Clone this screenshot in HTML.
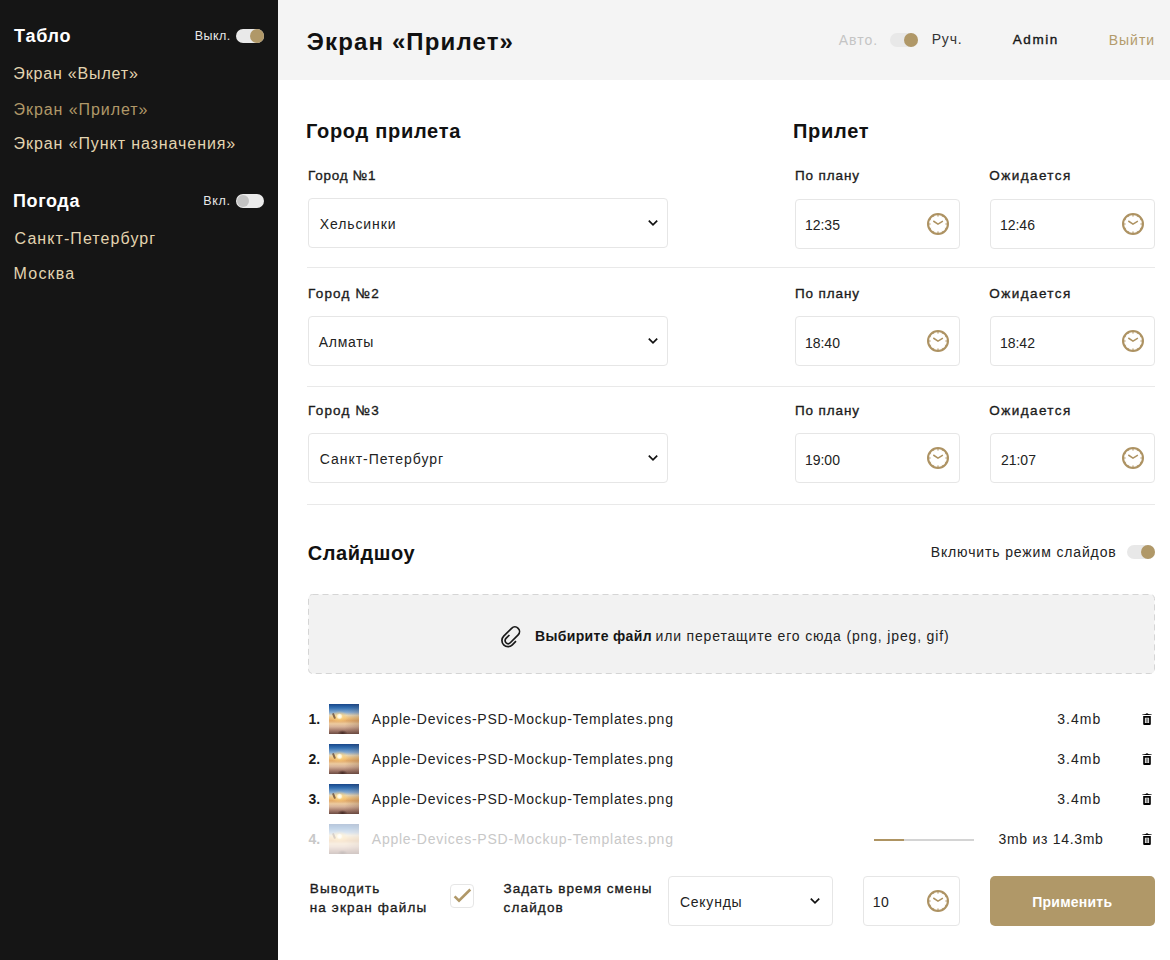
<!DOCTYPE html>
<html><head><meta charset="utf-8"><style>
html,body{margin:0;padding:0;width:1170px;height:960px;overflow:hidden;background:#fff;font-family:"Liberation Sans",sans-serif;}
.t{position:absolute;white-space:nowrap;}
</style></head><body>
<div style="position:absolute;left:0px;top:0px;width:278px;height:960px;background:#151515;"></div>
<div style="position:absolute;left:278px;top:0px;width:892px;height:80px;background:#f4f4f4;"></div>
<div style="position:absolute;left:236px;top:29px;width:28px;height:14px;border-radius:7px;background:#e9e9e9"></div>
<div style="position:absolute;left:250px;top:29px;width:14px;height:14px;border-radius:7px;background:#b09868"></div>
<div style="position:absolute;left:236px;top:194px;width:28px;height:14px;border-radius:7px;background:#ebebeb"></div>
<div style="position:absolute;left:237px;top:195px;width:12px;height:12px;border-radius:6px;background:#c3c3c3"></div>
<div style="position:absolute;left:890px;top:33px;width:28px;height:14px;border-radius:7px;background:#e8e8e8"></div>
<div style="position:absolute;left:904px;top:33px;width:14px;height:14px;border-radius:7px;background:#b09868"></div>
<div style="position:absolute;left:308px;top:198px;width:360px;height:50px;box-sizing:border-box;border:1px solid #e6e6e6;border-radius:4px;background:#fff"></div>
<svg style="position:absolute;left:646.5px;top:218.4px" width="12" height="10" viewBox="0 0 12 10"><polyline points="1.8,2.6 6,6.8 10.2,2.6" fill="none" stroke="#111" stroke-width="1.7" stroke-linecap="butt" stroke-linejoin="miter"/></svg>
<div style="position:absolute;left:795px;top:199px;width:165px;height:50px;box-sizing:border-box;border:1px solid #e6e6e6;border-radius:4px;background:#fff"></div>
<div style="position:absolute;left:990px;top:199px;width:165px;height:50px;box-sizing:border-box;border:1px solid #e6e6e6;border-radius:4px;background:#fff"></div>
<svg style="position:absolute;left:925.8px;top:212px" width="24" height="24" viewBox="0 0 24 24"><circle cx="12" cy="12" r="9.95" fill="none" stroke="#ad9262" stroke-width="2.1"/><line x1="12.00" y1="3.00" x2="12.00" y2="4.60" stroke="#ad9262" stroke-width="1.2"/><line x1="16.50" y1="4.21" x2="16.00" y2="5.07" stroke="#ad9262" stroke-width="0.9"/><line x1="19.79" y1="7.50" x2="18.93" y2="8.00" stroke="#ad9262" stroke-width="0.9"/><line x1="21.00" y1="12.00" x2="19.40" y2="12.00" stroke="#ad9262" stroke-width="1.2"/><line x1="19.79" y1="16.50" x2="18.93" y2="16.00" stroke="#ad9262" stroke-width="0.9"/><line x1="16.50" y1="19.79" x2="16.00" y2="18.93" stroke="#ad9262" stroke-width="0.9"/><line x1="12.00" y1="21.00" x2="12.00" y2="19.40" stroke="#ad9262" stroke-width="1.2"/><line x1="7.50" y1="19.79" x2="8.00" y2="18.93" stroke="#ad9262" stroke-width="0.9"/><line x1="4.21" y1="16.50" x2="5.07" y2="16.00" stroke="#ad9262" stroke-width="0.9"/><line x1="3.00" y1="12.00" x2="4.60" y2="12.00" stroke="#ad9262" stroke-width="1.2"/><line x1="4.21" y1="7.50" x2="5.07" y2="8.00" stroke="#ad9262" stroke-width="0.9"/><line x1="7.50" y1="4.21" x2="8.00" y2="5.07" stroke="#ad9262" stroke-width="0.9"/><polyline points="7.3,9 12,12.1 16.9,9.2" fill="none" stroke="#ad9262" stroke-width="1.5" stroke-linejoin="miter"/></svg>
<svg style="position:absolute;left:1120.8px;top:212px" width="24" height="24" viewBox="0 0 24 24"><circle cx="12" cy="12" r="9.95" fill="none" stroke="#ad9262" stroke-width="2.1"/><line x1="12.00" y1="3.00" x2="12.00" y2="4.60" stroke="#ad9262" stroke-width="1.2"/><line x1="16.50" y1="4.21" x2="16.00" y2="5.07" stroke="#ad9262" stroke-width="0.9"/><line x1="19.79" y1="7.50" x2="18.93" y2="8.00" stroke="#ad9262" stroke-width="0.9"/><line x1="21.00" y1="12.00" x2="19.40" y2="12.00" stroke="#ad9262" stroke-width="1.2"/><line x1="19.79" y1="16.50" x2="18.93" y2="16.00" stroke="#ad9262" stroke-width="0.9"/><line x1="16.50" y1="19.79" x2="16.00" y2="18.93" stroke="#ad9262" stroke-width="0.9"/><line x1="12.00" y1="21.00" x2="12.00" y2="19.40" stroke="#ad9262" stroke-width="1.2"/><line x1="7.50" y1="19.79" x2="8.00" y2="18.93" stroke="#ad9262" stroke-width="0.9"/><line x1="4.21" y1="16.50" x2="5.07" y2="16.00" stroke="#ad9262" stroke-width="0.9"/><line x1="3.00" y1="12.00" x2="4.60" y2="12.00" stroke="#ad9262" stroke-width="1.2"/><line x1="4.21" y1="7.50" x2="5.07" y2="8.00" stroke="#ad9262" stroke-width="0.9"/><line x1="7.50" y1="4.21" x2="8.00" y2="5.07" stroke="#ad9262" stroke-width="0.9"/><polyline points="7.3,9 12,12.1 16.9,9.2" fill="none" stroke="#ad9262" stroke-width="1.5" stroke-linejoin="miter"/></svg>
<div style="position:absolute;left:308px;top:316px;width:360px;height:50px;box-sizing:border-box;border:1px solid #e6e6e6;border-radius:4px;background:#fff"></div>
<svg style="position:absolute;left:646.5px;top:336.4px" width="12" height="10" viewBox="0 0 12 10"><polyline points="1.8,2.6 6,6.8 10.2,2.6" fill="none" stroke="#111" stroke-width="1.7" stroke-linecap="butt" stroke-linejoin="miter"/></svg>
<div style="position:absolute;left:795px;top:316px;width:165px;height:50px;box-sizing:border-box;border:1px solid #e6e6e6;border-radius:4px;background:#fff"></div>
<div style="position:absolute;left:990px;top:316px;width:165px;height:50px;box-sizing:border-box;border:1px solid #e6e6e6;border-radius:4px;background:#fff"></div>
<svg style="position:absolute;left:925.8px;top:329px" width="24" height="24" viewBox="0 0 24 24"><circle cx="12" cy="12" r="9.95" fill="none" stroke="#ad9262" stroke-width="2.1"/><line x1="12.00" y1="3.00" x2="12.00" y2="4.60" stroke="#ad9262" stroke-width="1.2"/><line x1="16.50" y1="4.21" x2="16.00" y2="5.07" stroke="#ad9262" stroke-width="0.9"/><line x1="19.79" y1="7.50" x2="18.93" y2="8.00" stroke="#ad9262" stroke-width="0.9"/><line x1="21.00" y1="12.00" x2="19.40" y2="12.00" stroke="#ad9262" stroke-width="1.2"/><line x1="19.79" y1="16.50" x2="18.93" y2="16.00" stroke="#ad9262" stroke-width="0.9"/><line x1="16.50" y1="19.79" x2="16.00" y2="18.93" stroke="#ad9262" stroke-width="0.9"/><line x1="12.00" y1="21.00" x2="12.00" y2="19.40" stroke="#ad9262" stroke-width="1.2"/><line x1="7.50" y1="19.79" x2="8.00" y2="18.93" stroke="#ad9262" stroke-width="0.9"/><line x1="4.21" y1="16.50" x2="5.07" y2="16.00" stroke="#ad9262" stroke-width="0.9"/><line x1="3.00" y1="12.00" x2="4.60" y2="12.00" stroke="#ad9262" stroke-width="1.2"/><line x1="4.21" y1="7.50" x2="5.07" y2="8.00" stroke="#ad9262" stroke-width="0.9"/><line x1="7.50" y1="4.21" x2="8.00" y2="5.07" stroke="#ad9262" stroke-width="0.9"/><polyline points="7.3,9 12,12.1 16.9,9.2" fill="none" stroke="#ad9262" stroke-width="1.5" stroke-linejoin="miter"/></svg>
<svg style="position:absolute;left:1120.8px;top:329px" width="24" height="24" viewBox="0 0 24 24"><circle cx="12" cy="12" r="9.95" fill="none" stroke="#ad9262" stroke-width="2.1"/><line x1="12.00" y1="3.00" x2="12.00" y2="4.60" stroke="#ad9262" stroke-width="1.2"/><line x1="16.50" y1="4.21" x2="16.00" y2="5.07" stroke="#ad9262" stroke-width="0.9"/><line x1="19.79" y1="7.50" x2="18.93" y2="8.00" stroke="#ad9262" stroke-width="0.9"/><line x1="21.00" y1="12.00" x2="19.40" y2="12.00" stroke="#ad9262" stroke-width="1.2"/><line x1="19.79" y1="16.50" x2="18.93" y2="16.00" stroke="#ad9262" stroke-width="0.9"/><line x1="16.50" y1="19.79" x2="16.00" y2="18.93" stroke="#ad9262" stroke-width="0.9"/><line x1="12.00" y1="21.00" x2="12.00" y2="19.40" stroke="#ad9262" stroke-width="1.2"/><line x1="7.50" y1="19.79" x2="8.00" y2="18.93" stroke="#ad9262" stroke-width="0.9"/><line x1="4.21" y1="16.50" x2="5.07" y2="16.00" stroke="#ad9262" stroke-width="0.9"/><line x1="3.00" y1="12.00" x2="4.60" y2="12.00" stroke="#ad9262" stroke-width="1.2"/><line x1="4.21" y1="7.50" x2="5.07" y2="8.00" stroke="#ad9262" stroke-width="0.9"/><line x1="7.50" y1="4.21" x2="8.00" y2="5.07" stroke="#ad9262" stroke-width="0.9"/><polyline points="7.3,9 12,12.1 16.9,9.2" fill="none" stroke="#ad9262" stroke-width="1.5" stroke-linejoin="miter"/></svg>
<div style="position:absolute;left:308px;top:433px;width:360px;height:50px;box-sizing:border-box;border:1px solid #e6e6e6;border-radius:4px;background:#fff"></div>
<svg style="position:absolute;left:646.5px;top:453.4px" width="12" height="10" viewBox="0 0 12 10"><polyline points="1.8,2.6 6,6.8 10.2,2.6" fill="none" stroke="#111" stroke-width="1.7" stroke-linecap="butt" stroke-linejoin="miter"/></svg>
<div style="position:absolute;left:795px;top:433px;width:165px;height:50px;box-sizing:border-box;border:1px solid #e6e6e6;border-radius:4px;background:#fff"></div>
<div style="position:absolute;left:990px;top:433px;width:165px;height:50px;box-sizing:border-box;border:1px solid #e6e6e6;border-radius:4px;background:#fff"></div>
<svg style="position:absolute;left:925.8px;top:446px" width="24" height="24" viewBox="0 0 24 24"><circle cx="12" cy="12" r="9.95" fill="none" stroke="#ad9262" stroke-width="2.1"/><line x1="12.00" y1="3.00" x2="12.00" y2="4.60" stroke="#ad9262" stroke-width="1.2"/><line x1="16.50" y1="4.21" x2="16.00" y2="5.07" stroke="#ad9262" stroke-width="0.9"/><line x1="19.79" y1="7.50" x2="18.93" y2="8.00" stroke="#ad9262" stroke-width="0.9"/><line x1="21.00" y1="12.00" x2="19.40" y2="12.00" stroke="#ad9262" stroke-width="1.2"/><line x1="19.79" y1="16.50" x2="18.93" y2="16.00" stroke="#ad9262" stroke-width="0.9"/><line x1="16.50" y1="19.79" x2="16.00" y2="18.93" stroke="#ad9262" stroke-width="0.9"/><line x1="12.00" y1="21.00" x2="12.00" y2="19.40" stroke="#ad9262" stroke-width="1.2"/><line x1="7.50" y1="19.79" x2="8.00" y2="18.93" stroke="#ad9262" stroke-width="0.9"/><line x1="4.21" y1="16.50" x2="5.07" y2="16.00" stroke="#ad9262" stroke-width="0.9"/><line x1="3.00" y1="12.00" x2="4.60" y2="12.00" stroke="#ad9262" stroke-width="1.2"/><line x1="4.21" y1="7.50" x2="5.07" y2="8.00" stroke="#ad9262" stroke-width="0.9"/><line x1="7.50" y1="4.21" x2="8.00" y2="5.07" stroke="#ad9262" stroke-width="0.9"/><polyline points="7.3,9 12,12.1 16.9,9.2" fill="none" stroke="#ad9262" stroke-width="1.5" stroke-linejoin="miter"/></svg>
<svg style="position:absolute;left:1120.8px;top:446px" width="24" height="24" viewBox="0 0 24 24"><circle cx="12" cy="12" r="9.95" fill="none" stroke="#ad9262" stroke-width="2.1"/><line x1="12.00" y1="3.00" x2="12.00" y2="4.60" stroke="#ad9262" stroke-width="1.2"/><line x1="16.50" y1="4.21" x2="16.00" y2="5.07" stroke="#ad9262" stroke-width="0.9"/><line x1="19.79" y1="7.50" x2="18.93" y2="8.00" stroke="#ad9262" stroke-width="0.9"/><line x1="21.00" y1="12.00" x2="19.40" y2="12.00" stroke="#ad9262" stroke-width="1.2"/><line x1="19.79" y1="16.50" x2="18.93" y2="16.00" stroke="#ad9262" stroke-width="0.9"/><line x1="16.50" y1="19.79" x2="16.00" y2="18.93" stroke="#ad9262" stroke-width="0.9"/><line x1="12.00" y1="21.00" x2="12.00" y2="19.40" stroke="#ad9262" stroke-width="1.2"/><line x1="7.50" y1="19.79" x2="8.00" y2="18.93" stroke="#ad9262" stroke-width="0.9"/><line x1="4.21" y1="16.50" x2="5.07" y2="16.00" stroke="#ad9262" stroke-width="0.9"/><line x1="3.00" y1="12.00" x2="4.60" y2="12.00" stroke="#ad9262" stroke-width="1.2"/><line x1="4.21" y1="7.50" x2="5.07" y2="8.00" stroke="#ad9262" stroke-width="0.9"/><line x1="7.50" y1="4.21" x2="8.00" y2="5.07" stroke="#ad9262" stroke-width="0.9"/><polyline points="7.3,9 12,12.1 16.9,9.2" fill="none" stroke="#ad9262" stroke-width="1.5" stroke-linejoin="miter"/></svg>
<div style="position:absolute;left:307px;top:267px;width:848px;height:1px;background:#e9e9e9;"></div>
<div style="position:absolute;left:307px;top:386px;width:848px;height:1px;background:#e9e9e9;"></div>
<div style="position:absolute;left:307px;top:504px;width:848px;height:1px;background:#e9e9e9;"></div>
<div style="position:absolute;left:1127px;top:545px;width:28px;height:14px;border-radius:7px;background:#e8e8e8"></div>
<div style="position:absolute;left:1141px;top:545px;width:14px;height:14px;border-radius:7px;background:#b09868"></div>
<svg style="position:absolute;left:308px;top:594px" width="847" height="80" viewBox="0 0 847 80"><rect x="0.5" y="0.5" width="846" height="79" rx="4" ry="4" fill="#f2f2f2" stroke="#d5d5d5" stroke-width="1" stroke-dasharray="6 4"/></svg>
<svg style="position:absolute;left:495px;top:620px" width="35" height="35" viewBox="0 0 35 35"><g transform="rotate(45)"><path d="M20.8,0.4 L20.8,5.3 A3.05,3.05 0 0 0 26.9,5.3 L26.9,-5.85 A4.65,4.65 0 0 0 17.6,-5.85 L17.6,5.3 A6.1,6.1 0 0 0 29.8,5.3 L29.8,0.13" fill="none" stroke="#1a1a1a" stroke-width="1.7" stroke-linecap="butt"/></g></svg>
<div style="position:absolute;left:329px;top:704px;width:30px;height:30px;overflow:hidden;"><div style="position:absolute;inset:0;background:radial-gradient(ellipse 3px 3px at 35% 41%, #ffffff 0%, #fff6d8 60%, rgba(255,240,200,0) 100%),radial-gradient(ellipse 9px 6px at 35% 43%, rgba(255,235,170,0.95) 0%, rgba(255,210,120,0.5) 50%, rgba(255,200,100,0) 100%),radial-gradient(ellipse 5px 3px at 45% 97%, rgba(60,35,30,0.9) 0%, rgba(60,35,30,0) 100%),linear-gradient(100deg, rgba(255,255,255,0) 0%, rgba(255,255,255,0) 55%, rgba(90,60,50,0.25) 100%),linear-gradient(180deg,#17468a 0%,#3470b2 13%,#86aad0 28%,#e6d6b4 38%,#f0c27e 47%,#e3aa68 56%,#eccaa0 66%,#d6b298 76%,#a98070 87%,#6c4b42 100%)"></div><div style="position:absolute;left:3.5px;top:8.5px;width:1.8px;height:6px;background:rgba(90,60,45,0.7);transform:rotate(-22deg);border-radius:1px"></div></div>
<svg style="position:absolute;left:1142px;top:712.6px" width="12" height="14" viewBox="0 0 12 14"><path d="M0.3,1.4 C1.5,1.2 2.6,1.2 3.6,0.9 C4.2,0 5.8,0 6.4,0.9 C7.4,1.2 8.5,1.2 9.7,1.4 L9.7,2.1 L0.3,2.1 Z" fill="#000"/><path d="M1.2,3.0 L8.8,3.0 L8.8,11 Q8.8,12 7.8,12 L2.2,12 Q1.2,12 1.2,11 Z M2.9,4.8 L2.9,10.1 L7.1,10.1 L7.1,4.8 Z" fill="#000" fill-rule="evenodd"/><rect x="3.6" y="5.2" width="2.8" height="4.6" fill="#888"/></svg>
<div style="position:absolute;left:329px;top:744px;width:30px;height:30px;overflow:hidden;"><div style="position:absolute;inset:0;background:radial-gradient(ellipse 3px 3px at 35% 41%, #ffffff 0%, #fff6d8 60%, rgba(255,240,200,0) 100%),radial-gradient(ellipse 9px 6px at 35% 43%, rgba(255,235,170,0.95) 0%, rgba(255,210,120,0.5) 50%, rgba(255,200,100,0) 100%),radial-gradient(ellipse 5px 3px at 45% 97%, rgba(60,35,30,0.9) 0%, rgba(60,35,30,0) 100%),linear-gradient(100deg, rgba(255,255,255,0) 0%, rgba(255,255,255,0) 55%, rgba(90,60,50,0.25) 100%),linear-gradient(180deg,#17468a 0%,#3470b2 13%,#86aad0 28%,#e6d6b4 38%,#f0c27e 47%,#e3aa68 56%,#eccaa0 66%,#d6b298 76%,#a98070 87%,#6c4b42 100%)"></div><div style="position:absolute;left:3.5px;top:8.5px;width:1.8px;height:6px;background:rgba(90,60,45,0.7);transform:rotate(-22deg);border-radius:1px"></div></div>
<svg style="position:absolute;left:1142px;top:752.6px" width="12" height="14" viewBox="0 0 12 14"><path d="M0.3,1.4 C1.5,1.2 2.6,1.2 3.6,0.9 C4.2,0 5.8,0 6.4,0.9 C7.4,1.2 8.5,1.2 9.7,1.4 L9.7,2.1 L0.3,2.1 Z" fill="#000"/><path d="M1.2,3.0 L8.8,3.0 L8.8,11 Q8.8,12 7.8,12 L2.2,12 Q1.2,12 1.2,11 Z M2.9,4.8 L2.9,10.1 L7.1,10.1 L7.1,4.8 Z" fill="#000" fill-rule="evenodd"/><rect x="3.6" y="5.2" width="2.8" height="4.6" fill="#888"/></svg>
<div style="position:absolute;left:329px;top:784px;width:30px;height:30px;overflow:hidden;"><div style="position:absolute;inset:0;background:radial-gradient(ellipse 3px 3px at 35% 41%, #ffffff 0%, #fff6d8 60%, rgba(255,240,200,0) 100%),radial-gradient(ellipse 9px 6px at 35% 43%, rgba(255,235,170,0.95) 0%, rgba(255,210,120,0.5) 50%, rgba(255,200,100,0) 100%),radial-gradient(ellipse 5px 3px at 45% 97%, rgba(60,35,30,0.9) 0%, rgba(60,35,30,0) 100%),linear-gradient(100deg, rgba(255,255,255,0) 0%, rgba(255,255,255,0) 55%, rgba(90,60,50,0.25) 100%),linear-gradient(180deg,#17468a 0%,#3470b2 13%,#86aad0 28%,#e6d6b4 38%,#f0c27e 47%,#e3aa68 56%,#eccaa0 66%,#d6b298 76%,#a98070 87%,#6c4b42 100%)"></div><div style="position:absolute;left:3.5px;top:8.5px;width:1.8px;height:6px;background:rgba(90,60,45,0.7);transform:rotate(-22deg);border-radius:1px"></div></div>
<svg style="position:absolute;left:1142px;top:792.6px" width="12" height="14" viewBox="0 0 12 14"><path d="M0.3,1.4 C1.5,1.2 2.6,1.2 3.6,0.9 C4.2,0 5.8,0 6.4,0.9 C7.4,1.2 8.5,1.2 9.7,1.4 L9.7,2.1 L0.3,2.1 Z" fill="#000"/><path d="M1.2,3.0 L8.8,3.0 L8.8,11 Q8.8,12 7.8,12 L2.2,12 Q1.2,12 1.2,11 Z M2.9,4.8 L2.9,10.1 L7.1,10.1 L7.1,4.8 Z" fill="#000" fill-rule="evenodd"/><rect x="3.6" y="5.2" width="2.8" height="4.6" fill="#888"/></svg>
<div style="position:absolute;left:329px;top:824px;width:30px;height:30px;overflow:hidden;opacity:0.3;"><div style="position:absolute;inset:0;background:radial-gradient(ellipse 3px 3px at 35% 41%, #ffffff 0%, #fff6d8 60%, rgba(255,240,200,0) 100%),radial-gradient(ellipse 9px 6px at 35% 43%, rgba(255,235,170,0.95) 0%, rgba(255,210,120,0.5) 50%, rgba(255,200,100,0) 100%),radial-gradient(ellipse 5px 3px at 45% 97%, rgba(60,35,30,0.9) 0%, rgba(60,35,30,0) 100%),linear-gradient(100deg, rgba(255,255,255,0) 0%, rgba(255,255,255,0) 55%, rgba(90,60,50,0.25) 100%),linear-gradient(180deg,#17468a 0%,#3470b2 13%,#86aad0 28%,#e6d6b4 38%,#f0c27e 47%,#e3aa68 56%,#eccaa0 66%,#d6b298 76%,#a98070 87%,#6c4b42 100%)"></div><div style="position:absolute;left:3.5px;top:8.5px;width:1.8px;height:6px;background:rgba(90,60,45,0.7);transform:rotate(-22deg);border-radius:1px"></div></div>
<svg style="position:absolute;left:1142px;top:832.6px" width="12" height="14" viewBox="0 0 12 14"><path d="M0.3,1.4 C1.5,1.2 2.6,1.2 3.6,0.9 C4.2,0 5.8,0 6.4,0.9 C7.4,1.2 8.5,1.2 9.7,1.4 L9.7,2.1 L0.3,2.1 Z" fill="#000"/><path d="M1.2,3.0 L8.8,3.0 L8.8,11 Q8.8,12 7.8,12 L2.2,12 Q1.2,12 1.2,11 Z M2.9,4.8 L2.9,10.1 L7.1,10.1 L7.1,4.8 Z" fill="#000" fill-rule="evenodd"/><rect x="3.6" y="5.2" width="2.8" height="4.6" fill="#888"/></svg>
<div style="position:absolute;left:874px;top:839px;width:100px;height:2px;background:#d4d4d4;"></div>
<div style="position:absolute;left:874px;top:839px;width:30px;height:2px;background:#ae9462;"></div>
<div style="position:absolute;left:450px;top:884px;width:24px;height:24px;box-sizing:border-box;border:1px solid #e6e6e6;border-radius:4px;background:#fff"></div>
<svg style="position:absolute;left:450px;top:884px" width="24" height="24" viewBox="0 0 24 24"><polyline points="4.6,12.4 9,16.6 20.3,5.5" fill="none" stroke="#b09868" stroke-width="2.6" stroke-linecap="butt" stroke-linejoin="miter"/></svg>
<div style="position:absolute;left:668px;top:876px;width:165px;height:50px;box-sizing:border-box;border:1px solid #e6e6e6;border-radius:4px;background:#fff"></div>
<svg style="position:absolute;left:808.6px;top:896.4px" width="12" height="10" viewBox="0 0 12 10"><polyline points="1.8,2.6 6,6.8 10.2,2.6" fill="none" stroke="#111" stroke-width="1.7" stroke-linecap="butt" stroke-linejoin="miter"/></svg>
<div style="position:absolute;left:863px;top:876px;width:97px;height:50px;box-sizing:border-box;border:1px solid #e6e6e6;border-radius:4px;background:#fff"></div>
<svg style="position:absolute;left:926px;top:889px" width="24" height="24" viewBox="0 0 24 24"><circle cx="12" cy="12" r="9.95" fill="none" stroke="#ad9262" stroke-width="2.1"/><line x1="12.00" y1="3.00" x2="12.00" y2="4.60" stroke="#ad9262" stroke-width="1.2"/><line x1="16.50" y1="4.21" x2="16.00" y2="5.07" stroke="#ad9262" stroke-width="0.9"/><line x1="19.79" y1="7.50" x2="18.93" y2="8.00" stroke="#ad9262" stroke-width="0.9"/><line x1="21.00" y1="12.00" x2="19.40" y2="12.00" stroke="#ad9262" stroke-width="1.2"/><line x1="19.79" y1="16.50" x2="18.93" y2="16.00" stroke="#ad9262" stroke-width="0.9"/><line x1="16.50" y1="19.79" x2="16.00" y2="18.93" stroke="#ad9262" stroke-width="0.9"/><line x1="12.00" y1="21.00" x2="12.00" y2="19.40" stroke="#ad9262" stroke-width="1.2"/><line x1="7.50" y1="19.79" x2="8.00" y2="18.93" stroke="#ad9262" stroke-width="0.9"/><line x1="4.21" y1="16.50" x2="5.07" y2="16.00" stroke="#ad9262" stroke-width="0.9"/><line x1="3.00" y1="12.00" x2="4.60" y2="12.00" stroke="#ad9262" stroke-width="1.2"/><line x1="4.21" y1="7.50" x2="5.07" y2="8.00" stroke="#ad9262" stroke-width="0.9"/><line x1="7.50" y1="4.21" x2="8.00" y2="5.07" stroke="#ad9262" stroke-width="0.9"/><polyline points="7.3,9 12,12.1 16.9,9.2" fill="none" stroke="#ad9262" stroke-width="1.5" stroke-linejoin="miter"/></svg>
<div style="position:absolute;left:990px;top:876px;width:165px;height:50px;background:#b09868;border-radius:5px;"></div>
<div class="t" style="left:14.1px;top:27.0px;font-weight:700;font-size:18px;line-height:18px;color:#ffffff;letter-spacing:0.750px;">Табло</div>
<div class="t" style="left:194.8px;top:30.0px;font-weight:400;font-size:12.5px;line-height:12.5px;color:#e8e8e8;letter-spacing:0.450px;">Выкл.</div>
<div class="t" style="left:13.3px;top:66.0px;font-weight:400;font-size:16px;line-height:16px;color:#e3d4b0;letter-spacing:0.833px;">Экран «Вылет»</div>
<div class="t" style="left:13.6px;top:102.0px;font-weight:400;font-size:16px;line-height:16px;color:#b09868;letter-spacing:0.923px;">Экран «Прилет»</div>
<div class="t" style="left:13.6px;top:136.0px;font-weight:400;font-size:16px;line-height:16px;color:#e3d4b0;letter-spacing:0.913px;">Экран «Пункт назначения»</div>
<div class="t" style="left:13.0px;top:192.0px;font-weight:700;font-size:18px;line-height:18px;color:#ffffff;letter-spacing:0.600px;">Погода</div>
<div class="t" style="left:203.2px;top:195.0px;font-weight:400;font-size:12.5px;line-height:12.5px;color:#e8e8e8;letter-spacing:0.667px;">Вкл.</div>
<div class="t" style="left:14.6px;top:231.0px;font-weight:400;font-size:16px;line-height:16px;color:#e3d4b0;letter-spacing:1.071px;">Санкт-Петербург</div>
<div class="t" style="left:13.6px;top:266.0px;font-weight:400;font-size:16px;line-height:16px;color:#e3d4b0;letter-spacing:1.200px;">Москва</div>
<div class="t" style="left:306.8px;top:30.0px;font-weight:700;font-size:24px;line-height:24px;color:#111111;letter-spacing:1.138px;">Экран «Прилет»</div>
<div class="t" style="left:838.7px;top:33.0px;font-weight:400;font-size:14px;line-height:14px;color:#c4c4c4;letter-spacing:1.000px;">Авто.</div>
<div class="t" style="left:931.7px;top:32.0px;font-weight:400;font-size:14px;line-height:14px;color:#333333;letter-spacing:0.800px;">Руч.</div>
<div class="t" style="left:1012.8px;top:33.0px;font-weight:400;font-size:13.5px;line-height:13.5px;color:#151515;letter-spacing:1.550px;-webkit-text-stroke:0.35px currentColor;">Admin</div>
<div class="t" style="left:1108.7px;top:33.0px;font-weight:400;font-size:14px;line-height:14px;color:#b39b6b;letter-spacing:1.000px;">Выйти</div>
<div class="t" style="left:305.9px;top:121.0px;font-weight:700;font-size:20px;line-height:20px;color:#111111;letter-spacing:0.717px;">Город прилета</div>
<div class="t" style="left:793.0px;top:121.0px;font-weight:700;font-size:20px;line-height:20px;color:#111111;letter-spacing:0.720px;">Прилет</div>
<div class="t" style="left:308.1px;top:169.0px;font-weight:400;font-size:13.5px;line-height:13.5px;color:#1b1b1b;letter-spacing:0.743px;-webkit-text-stroke:0.35px currentColor;">Город №1</div>
<div class="t" style="left:795.0px;top:169.0px;font-weight:400;font-size:13.5px;line-height:13.5px;color:#1b1b1b;letter-spacing:0.886px;-webkit-text-stroke:0.35px currentColor;">По плану</div>
<div class="t" style="left:989.3px;top:169.0px;font-weight:400;font-size:13.5px;line-height:13.5px;color:#1b1b1b;letter-spacing:1.425px;-webkit-text-stroke:0.35px currentColor;">Ожидается</div>
<div class="t" style="left:319.7px;top:217.0px;font-weight:400;font-size:14px;line-height:14px;color:#222222;letter-spacing:0.900px;">Хельсинки</div>
<div class="t" style="left:804.9px;top:218.0px;font-weight:400;font-size:14px;line-height:14px;color:#222222;letter-spacing:0.000px;">12:35</div>
<div class="t" style="left:999.9px;top:218.0px;font-weight:400;font-size:14px;line-height:14px;color:#222222;letter-spacing:0.000px;">12:46</div>
<div class="t" style="left:308.1px;top:287.0px;font-weight:400;font-size:13.5px;line-height:13.5px;color:#1b1b1b;letter-spacing:1.200px;-webkit-text-stroke:0.35px currentColor;">Город №2</div>
<div class="t" style="left:795.0px;top:287.0px;font-weight:400;font-size:13.5px;line-height:13.5px;color:#1b1b1b;letter-spacing:0.886px;-webkit-text-stroke:0.35px currentColor;">По плану</div>
<div class="t" style="left:989.3px;top:287.0px;font-weight:400;font-size:13.5px;line-height:13.5px;color:#1b1b1b;letter-spacing:1.425px;-webkit-text-stroke:0.35px currentColor;">Ожидается</div>
<div class="t" style="left:318.7px;top:335.0px;font-weight:400;font-size:14px;line-height:14px;color:#222222;letter-spacing:0.720px;">Алматы</div>
<div class="t" style="left:804.9px;top:336.0px;font-weight:400;font-size:14px;line-height:14px;color:#222222;letter-spacing:0.000px;">18:40</div>
<div class="t" style="left:999.9px;top:336.0px;font-weight:400;font-size:14px;line-height:14px;color:#222222;letter-spacing:0.000px;">18:42</div>
<div class="t" style="left:308.1px;top:404.0px;font-weight:400;font-size:13.5px;line-height:13.5px;color:#1b1b1b;letter-spacing:1.200px;-webkit-text-stroke:0.35px currentColor;">Город №3</div>
<div class="t" style="left:795.0px;top:404.0px;font-weight:400;font-size:13.5px;line-height:13.5px;color:#1b1b1b;letter-spacing:0.886px;-webkit-text-stroke:0.35px currentColor;">По плану</div>
<div class="t" style="left:989.3px;top:404.0px;font-weight:400;font-size:13.5px;line-height:13.5px;color:#1b1b1b;letter-spacing:1.425px;-webkit-text-stroke:0.35px currentColor;">Ожидается</div>
<div class="t" style="left:319.7px;top:452.0px;font-weight:400;font-size:14px;line-height:14px;color:#222222;letter-spacing:0.971px;">Санкт-Петербург</div>
<div class="t" style="left:804.9px;top:453.0px;font-weight:400;font-size:14px;line-height:14px;color:#222222;letter-spacing:0.000px;">19:00</div>
<div class="t" style="left:1000.9px;top:453.0px;font-weight:400;font-size:14px;line-height:14px;color:#222222;letter-spacing:0.000px;">21:07</div>
<div class="t" style="left:307.7px;top:543.0px;font-weight:700;font-size:20px;line-height:20px;color:#111111;letter-spacing:0.571px;">Слайдшоу</div>
<div class="t" style="left:930.75px;top:545.0px;font-weight:400;font-size:14px;line-height:14px;color:#222222;letter-spacing:0.857px;">Включить режим слайдов</div>
<div class="t" style="left:535.0px;top:629.0px;font-weight:700;font-size:14px;line-height:14px;color:#161616;letter-spacing:0.333px;">Выбирите файл</div>
<div class="t" style="left:655.5px;top:629.0px;font-weight:400;font-size:14px;line-height:14px;color:#222222;letter-spacing:0.841px;">или перетащите его сюда (png, jpeg, gif)</div>
<div class="t" style="left:308.5px;top:712.0px;font-weight:700;font-size:14px;line-height:14px;color:#1b1b1b;letter-spacing:0.000px;">1.</div>
<div class="t" style="left:371.8px;top:712.0px;font-weight:400;font-size:14px;line-height:14px;color:#222222;letter-spacing:0.757px;">Apple-Devices-PSD-Mockup-Templates.png</div>
<div class="t" style="left:308.5px;top:752.0px;font-weight:700;font-size:14px;line-height:14px;color:#1b1b1b;letter-spacing:0.000px;">2.</div>
<div class="t" style="left:371.8px;top:752.0px;font-weight:400;font-size:14px;line-height:14px;color:#222222;letter-spacing:0.757px;">Apple-Devices-PSD-Mockup-Templates.png</div>
<div class="t" style="left:308.5px;top:792.0px;font-weight:700;font-size:14px;line-height:14px;color:#1b1b1b;letter-spacing:0.000px;">3.</div>
<div class="t" style="left:371.8px;top:792.0px;font-weight:400;font-size:14px;line-height:14px;color:#222222;letter-spacing:0.757px;">Apple-Devices-PSD-Mockup-Templates.png</div>
<div class="t" style="left:308.5px;top:832.0px;font-weight:700;font-size:14px;line-height:14px;color:#c8c8c8;letter-spacing:0.000px;">4.</div>
<div class="t" style="left:371.8px;top:832.0px;font-weight:400;font-size:14px;line-height:14px;color:#c8c8c8;letter-spacing:0.757px;">Apple-Devices-PSD-Mockup-Templates.png</div>
<div class="t" style="left:1057.3px;top:712.0px;font-weight:400;font-size:14px;line-height:14px;color:#222222;letter-spacing:1.000px;">3.4mb</div>
<div class="t" style="left:1057.3px;top:752.0px;font-weight:400;font-size:14px;line-height:14px;color:#222222;letter-spacing:1.000px;">3.4mb</div>
<div class="t" style="left:1057.3px;top:792.0px;font-weight:400;font-size:14px;line-height:14px;color:#222222;letter-spacing:1.000px;">3.4mb</div>
<div class="t" style="left:998.5px;top:832.0px;font-weight:400;font-size:14px;line-height:14px;color:#222222;letter-spacing:0.700px;">3mb из 14.3mb</div>
<div class="t" style="left:309.8px;top:882.0px;font-weight:400;font-size:13.5px;line-height:13.5px;color:#1b1b1b;letter-spacing:1.143px;-webkit-text-stroke:0.35px currentColor;">Выводить</div>
<div class="t" style="left:309.7px;top:901.0px;font-weight:400;font-size:13.5px;line-height:13.5px;color:#1b1b1b;letter-spacing:1.154px;-webkit-text-stroke:0.35px currentColor;">на экран файлы</div>
<div class="t" style="left:503.5px;top:882.0px;font-weight:400;font-size:13.5px;line-height:13.5px;color:#1b1b1b;letter-spacing:1.000px;-webkit-text-stroke:0.35px currentColor;">Задать время смены</div>
<div class="t" style="left:503.5px;top:901.0px;font-weight:400;font-size:13.5px;line-height:13.5px;color:#1b1b1b;letter-spacing:1.167px;-webkit-text-stroke:0.35px currentColor;">слайдов</div>
<div class="t" style="left:679.9px;top:895.0px;font-weight:400;font-size:14px;line-height:14px;color:#222222;letter-spacing:0.767px;">Секунды</div>
<div class="t" style="left:872.8px;top:895.0px;font-weight:400;font-size:14px;line-height:14px;color:#222222;letter-spacing:0.400px;">10</div>
<div class="t" style="left:1032.2px;top:895.0px;font-weight:700;font-size:14px;line-height:14px;color:#ffffff;letter-spacing:0.250px;">Применить</div>
</body></html>
